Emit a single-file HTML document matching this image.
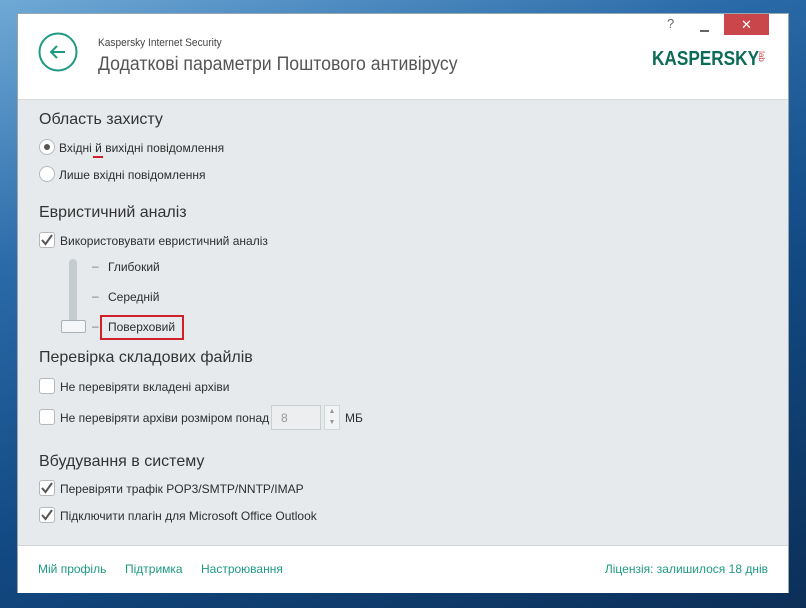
<!DOCTYPE html>
<html><head><meta charset="utf-8"><style>
*{margin:0;padding:0;box-sizing:border-box}
body{width:806px;height:608px;overflow:hidden;position:relative;font-family:"Liberation Sans","DejaVu Sans",sans-serif;
background:linear-gradient(160deg,#6fa9d6 0%,#2a6aa8 30%,#124a84 60%,#0c2f57 100%);}
.win{position:absolute;left:17px;top:13px;width:772px;height:580px;background:#e6eaed;border:1px solid #9aa6ae;}
.hdr{position:absolute;left:0;top:0;width:100%;height:86px;background:#fff;border-bottom:1px solid #d7dcdf}
.ftr{position:absolute;left:0;top:531px;width:100%;height:48px;background:#fff;border-top:1px solid #cfd5d9}
.t{position:absolute;white-space:nowrap;color:#333}
.h{font-size:16px;color:#333}
.s{font-size:12px;color:#2d2d2d}
.g{color:#1e9a82;font-size:12px}
.cb{position:absolute;width:16px;height:16px;border:1px solid #b3b9bd;border-radius:3px;background:#fff}
.rb{position:absolute;width:16px;height:16px;border:1px solid #b3b9bd;border-radius:50%;background:#fff}
</style></head><body>
<div class="win">
 <div class="hdr">
  <svg style="position:absolute;left:20px;top:18px" width="40" height="40"><circle cx="20" cy="20" r="18.5" fill="none" stroke="#1e9a82" stroke-width="2"/><path d="M27 20H13M19 14l-6 6 6 6" fill="none" stroke="#1e9a82" stroke-width="2"/></svg>
  <div class="t" style="left:80px;top:23px;font-size:11px;color:#444;transform:scaleX(0.92);transform-origin:left">Kaspersky Internet Security</div>
  <div class="t" style="left:80px;top:40px;font-size:19px;color:#555;transform:scaleX(0.93);transform-origin:left">Додаткові параметри Поштового антивірусу</div>
  <div class="t" style="left:649px;top:2px;font-size:13px;color:#666">?</div>
  <div style="position:absolute;left:682px;top:16px;width:9px;height:2px;background:#666"></div>
  <div style="position:absolute;left:706px;top:0;width:45px;height:21px;background:#c9474b;color:#fff;text-align:center;font-size:13px;line-height:21px">✕</div>
  <div class="t" style="left:634px;top:34px;font-size:20px;font-weight:bold;color:#0b6b57;transform:scaleX(0.86);transform-origin:left">KASPERSKY</div>
  <div class="t" style="left:738px;top:38px;font-size:8px;color:#c9474b;transform:rotate(90deg)">lab</div>
 </div>
 <div class="t h" style="left:21px;top:97px">Область захисту</div>
 <div class="rb" style="left:21px;top:125px"><div style="position:absolute;left:4px;top:4px;width:6px;height:6px;border-radius:50%;background:#555"></div></div>
 <div class="t s" style="left:41px;top:127px">Вхідні й вихідні повідомлення</div>
 <div style="position:absolute;left:75px;top:142px;width:10px;height:2px;background:#d0202a"></div>
 <div class="rb" style="left:21px;top:152px"></div>
 <div class="t s" style="left:41px;top:154px">Лише вхідні повідомлення</div>
 <div class="t h" style="left:21px;top:190px">Евристичний аналіз</div>
 <div class="cb" style="left:21px;top:218px"><svg width="14" height="14"><path d="M2 7l3.5 4L12 2" fill="none" stroke="#555" stroke-width="2"/></svg></div>
 <div class="t s" style="left:42px;top:220px">Використовувати евристичний аналіз</div>
 <div style="position:absolute;left:51px;top:245px;width:8px;height:70px;background:#c5ccd0;border-radius:4px"></div>
 <div style="position:absolute;left:43px;top:306px;width:25px;height:13px;background:#f4f6f7;border:1px solid #a9b0b5;border-radius:2px"></div>
 <div class="t s" style="left:74px;top:245px;color:#777">–</div>
 <div class="t s" style="left:90px;top:246px">Глибокий</div>
 <div class="t s" style="left:74px;top:275px;color:#777">–</div>
 <div class="t s" style="left:90px;top:276px">Середній</div>
 <div class="t s" style="left:74px;top:305px;color:#777">–</div>
 <div style="position:absolute;left:82px;top:301px;width:84px;height:25px;border:2px solid #d0202a"></div>
 <div class="t s" style="left:90px;top:306px">Поверховий</div>
 <div class="t h" style="left:21px;top:335px">Перевірка складових файлів</div>
 <div class="cb" style="left:21px;top:364px"></div>
 <div class="t s" style="left:42px;top:366px">Не перевіряти вкладені архіви</div>
 <div class="cb" style="left:21px;top:395px"></div>
 <div class="t s" style="left:42px;top:397px">Не перевіряти архіви розміром понад</div>
 <div style="position:absolute;left:253px;top:391px;width:50px;height:25px;background:#eceeef;border:1px solid #c9ced1;font-size:12px;color:#999;padding:5px 0 0 9px">8</div>
 <div style="position:absolute;left:306px;top:391px;width:16px;height:25px;background:#f1f3f4;border:1px solid #d2d6d9;font-size:7px;color:#999;text-align:center;line-height:11px">▲<br>▼</div>
 <div class="t s" style="left:327px;top:397px">МБ</div>
 <div class="t h" style="left:21px;top:439px">Вбудування в систему</div>
 <div class="cb" style="left:21px;top:466px"><svg width="14" height="14"><path d="M2 7l3.5 4L12 2" fill="none" stroke="#555" stroke-width="2"/></svg></div>
 <div class="t s" style="left:42px;top:468px">Перевіряти трафік POP3/SMTP/NNTP/IMAP</div>
 <div class="cb" style="left:21px;top:493px"><svg width="14" height="14"><path d="M2 7l3.5 4L12 2" fill="none" stroke="#555" stroke-width="2"/></svg></div>
 <div class="t s" style="left:42px;top:495px">Підключити плагін для Microsoft Office Outlook</div>
 <div class="ftr">
  <div class="t g" style="left:20px;top:16px">Мій профіль</div>
  <div class="t g" style="left:107px;top:16px">Підтримка</div>
  <div class="t g" style="left:183px;top:16px">Настроювання</div>
  <div class="t g" style="right:20px;top:16px">Ліцензія: залишилося 18 днів</div>
 </div>
</div>
</body></html>
